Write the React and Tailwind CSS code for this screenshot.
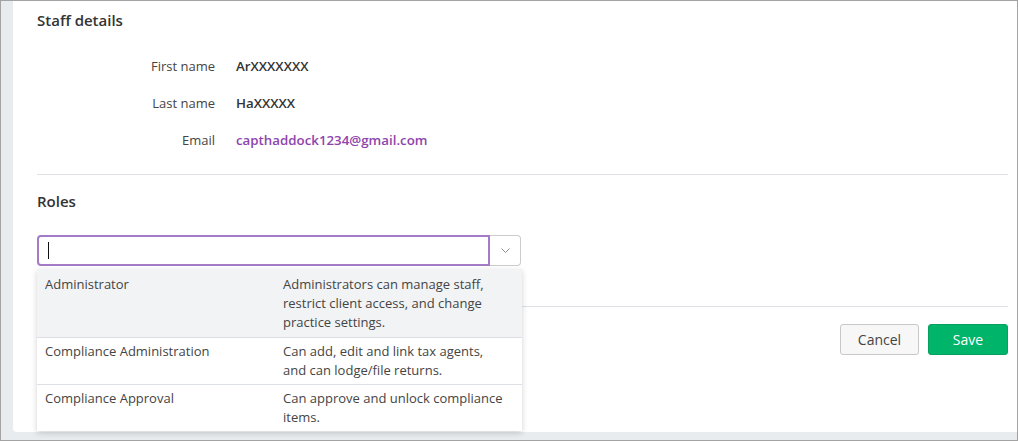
import React from 'react';

const details = [
  { label: 'First name', value: 'ArXXXXXXX' },
  { label: 'Last name', value: 'HaXXXXX' },
  { label: 'Email', value: 'capthaddock1234@gmail.com', email: true },
];

const roles = [
  {
    name: 'Administrator',
    desc: 'Administrators can manage staff, restrict client access, and change practice settings.',
    active: true,
    h: 'h-[68px] pt-[6px]',
  },
  { name: 'Compliance Administration', desc: 'Can add, edit and link tax agents, and can lodge/file returns.', h: 'h-[47px] pt-[4px]' },
  { name: 'Compliance Approval', desc: 'Can approve and unlock compliance items.', h: 'h-[47px] pt-[4px]' },
];

function ChevronDown() {
  return (
    <svg width="9" height="5" viewBox="0 0 9 5" fill="none">
      <path d="M0.5 0.5 L4.5 4.5 L8.5 0.5" stroke="#8a8f96" strokeWidth="1" />
    </svg>
  );
}

export default function App() {
  return (
    <div className="w-[1018px] h-[441px] border border-[#a3a3a3] bg-[#e9ecef] flex pl-[12px] pb-[8px] overflow-hidden font-['Open_Sans',sans-serif] text-[13px]">
      <div className="flex-1 bg-white rounded-bl-[4px] pl-[24px] pr-[9px] pt-[9px] flex flex-col">
        <h2 className="text-[15px] leading-[20px] font-semibold text-[#333]">Staff details</h2>

        <div className="mt-[26px] flex flex-col gap-[17px]">
          {details.map((d) => (
            <div key={d.label} className="flex items-center h-[20px] leading-[20px]">
              <div className="w-[178px] text-right text-[#444]">{d.label}</div>
              <div className={`ml-[21px] font-semibold text-[13.3px] ${d.email ? 'text-[#8e44ad]' : 'text-[#333]'}`}>{d.value}</div>
            </div>
          ))}
        </div>

        <div className="mt-[24px] h-px bg-[#dee2e6]" />

        <h2 className="mt-[16px] text-[15px] leading-[20px] font-semibold text-[#333]">Roles</h2>

        <div className="relative mt-[24px] w-[484px]">
          <div className="flex h-[31px]">
            <div className="flex-1 border-2 border-[#a47bc7] rounded-l-[4px] flex items-center pl-[9px]">
              <div className="w-px h-[17px] bg-[#111]" />
            </div>
            <div className="w-[31px] border border-l-0 border-[#ccc] rounded-r-[4px] flex items-center justify-center">
              <ChevronDown />
            </div>
          </div>

          <div className="absolute left-0 top-[34px] w-[485px] bg-white shadow-[0_2px_6px_rgba(0,0,0,0.18)] z-10 text-[#444]">
            {roles.map((r, i) => (
              <div
                key={r.name}
                className={`flex ${r.h} leading-[19px] ${i > 0 ? 'border-t border-[#dcdfe3]' : ''} ${r.active ? 'bg-[#f2f3f5]' : ''}`}
              >
                <div className="w-[246px] pl-[8px]">{r.name}</div>
                <div className="w-[231px] pr-[6px]">{r.desc}</div>
              </div>
            ))}
          </div>
        </div>

        <div className="mt-[40px] h-px bg-[#dee2e6]" />

        <div className="mt-[17px] flex justify-end gap-[9px]">
          <button className="w-[79px] h-[31px] rounded-[3px] border border-[#c8c8c8] bg-[#f7f7f7] text-[#444] text-[14px]">
            Cancel
          </button>
          <button className="w-[80px] h-[31px] rounded-[3px] border border-[#07a061] bg-[#00b46a] text-white text-[14px]">
            Save
          </button>
        </div>
      </div>
    </div>
  );
}
